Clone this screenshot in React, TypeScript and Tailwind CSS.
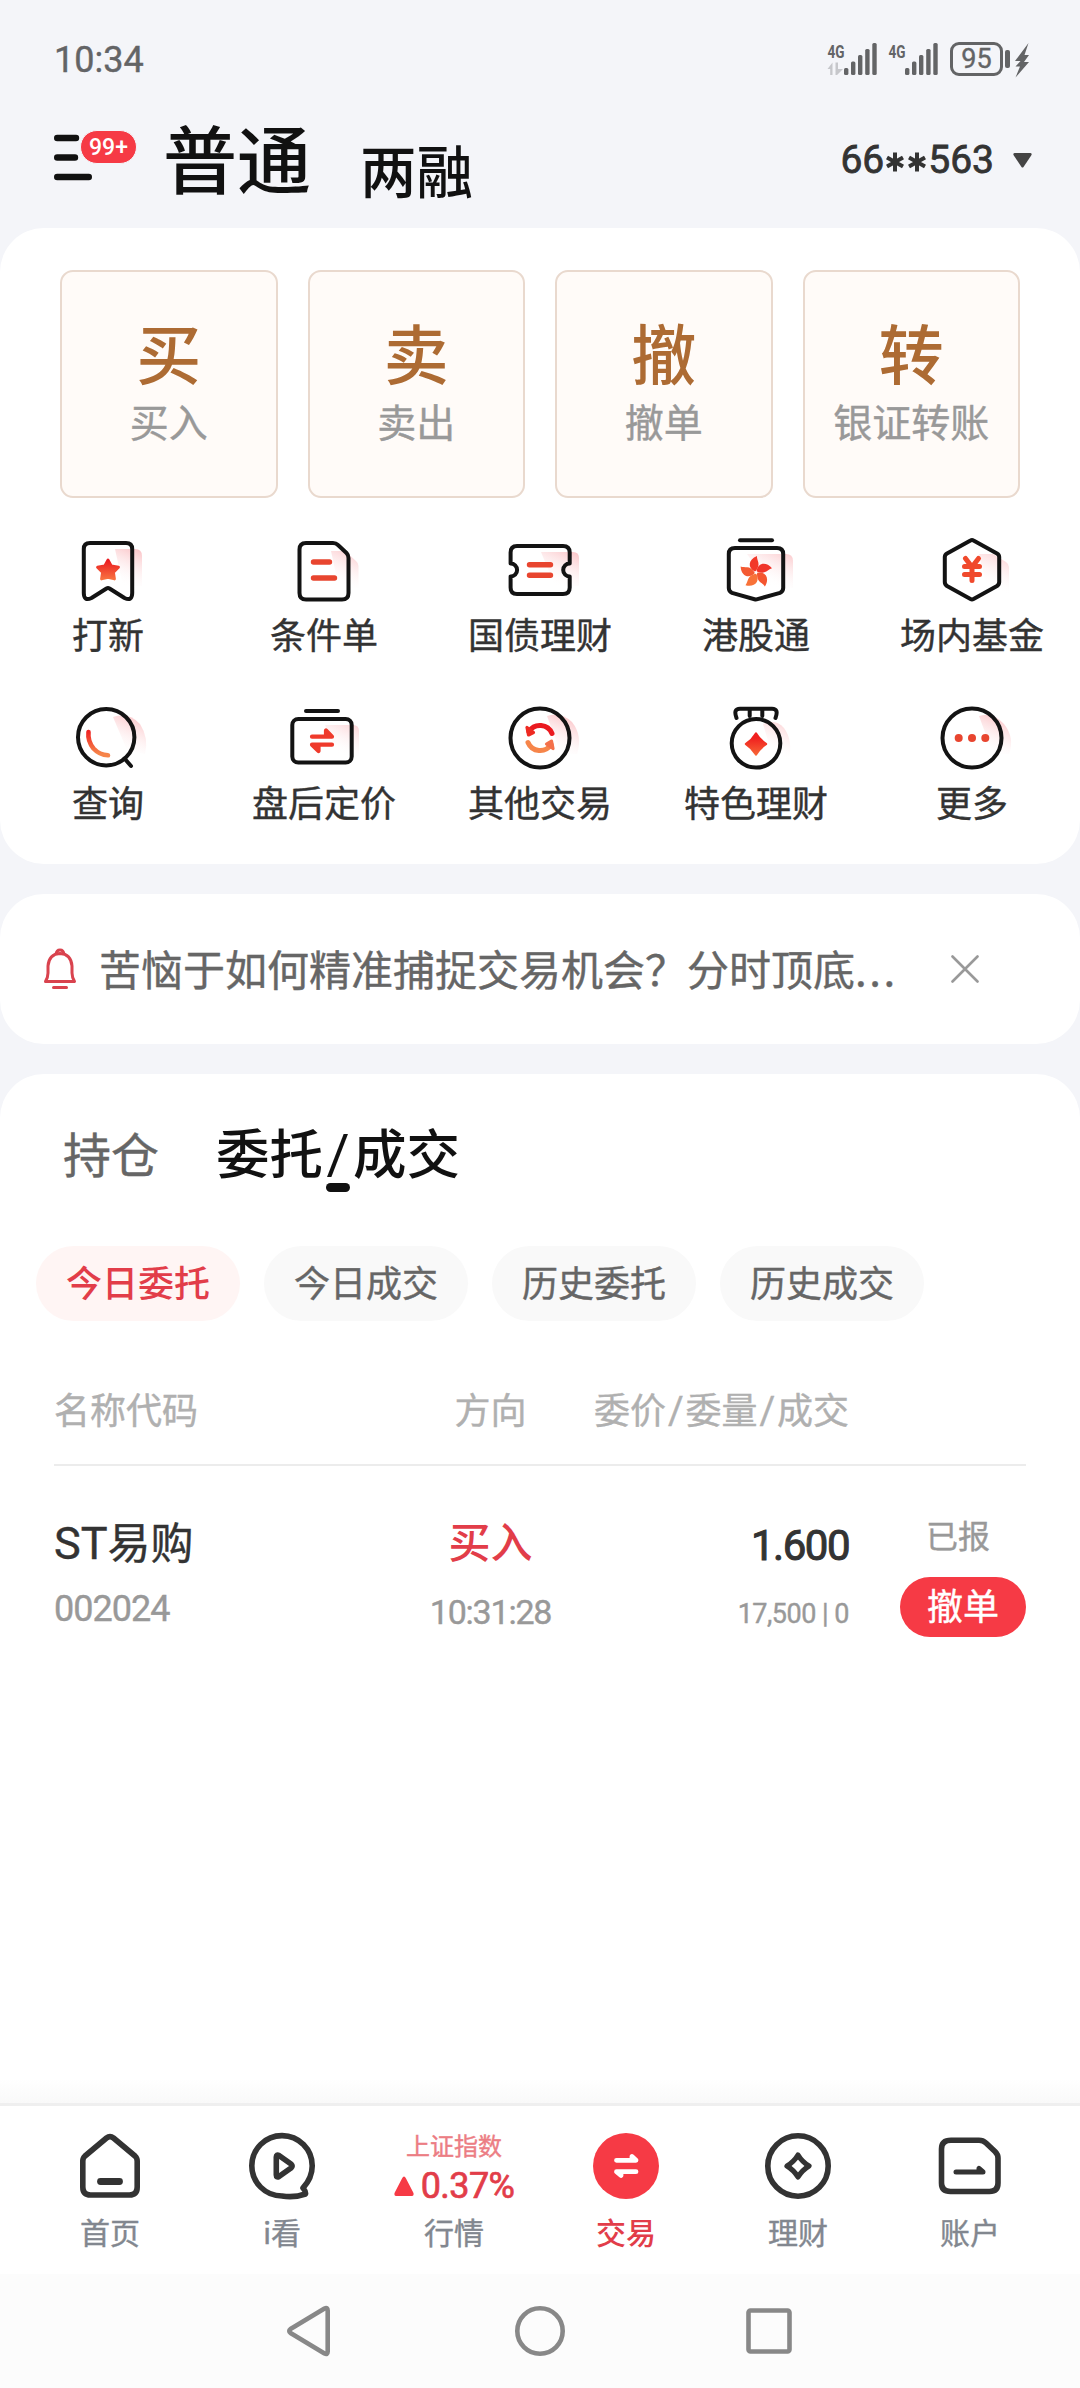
import type { ReactNode } from "react";

const CJK = "font-['Noto_Sans_CJK_SC',sans-serif]";
const NUM = "font-['Roboto','Noto_Sans_CJK_SC',sans-serif]";

function Signal({ activity }: { activity: boolean }) {
  return (
    <svg className="mt-[-10px]" width="51" height="46" viewBox="0 -10 51 46" fill="#636466">
      <text x="0.500" y="15.500" fontSize="19" fontWeight="700" textLength="17" lengthAdjust="spacingAndGlyphs" className={NUM}>4G</text>
      {activity && <path d="M0.500 27 L5.500 20.500 V33 H3.200 V27Z M8.500 20.500 H11 V27 H16 L10 33 H8.500Z" fill="#c6c7cb" />}
      <rect x="17" y="26" width="4.400" height="7" rx="1.500" />
      <rect x="24" y="19.500" width="4.400" height="13.500" rx="1.500" />
      <rect x="31" y="13" width="4.400" height="20" rx="1.500" />
      <rect x="38.200" y="7" width="4.400" height="26" rx="1.500" />
      <rect x="45.300" y="1" width="4.400" height="32" rx="1.500" />
    </svg>
  );
}

function StatusBar() {
  return (
    <div className={`flex h-[112px] items-start justify-between pr-[49px] pl-[54px] text-[#636466] ${NUM}`}>
      <div className="mt-[39px] text-[36px] leading-[42px]">10:34</div>
      <div className="mt-[42px] flex items-start">
        <Signal activity />
        <div className="ml-[10px]"><Signal activity={false} /></div>
        <div className="ml-[11px] flex h-[34px] w-[53px] items-center justify-center rounded-[9px] border-[3.5px] border-[#636466] text-[27px] leading-[30px]">95</div>
        <div className="mt-[8px] ml-[2px] h-[18px] w-[5px] rounded-[2px] bg-[#636466]" />
        <svg className="ml-[4px]" width="17" height="36" viewBox="0 0 17 36" fill="#636466">
          <path d="M14.500 1 L1 19 H6.500 L1.500 24.500 H6 L1.500 35.500 L15 20 H10 L15 13 H10.500Z" />
        </svg>
      </div>
    </div>
  );
}

function Header() {
  return (
    <div className="flex h-[116px] items-start pl-[54px] text-[#111]">
      <div className="relative mt-[22px] w-[109px]">
        <svg width="40" height="48" viewBox="0 0 40 48" fill="none" stroke="#111" strokeWidth="6.400" strokeLinecap="round">
          <path d="M3.200 4 H22 M3.200 23.500 H21 M3.200 43 H34.800" />
        </svg>
        <div className={`absolute top-[-4px] left-[26px] flex h-[34px] w-[57px] items-center justify-center rounded-full border border-[#f4f5f9] bg-[#f63a45] pt-[1px] text-[23px] leading-[33px] font-medium text-white ${NUM}`}>99+</div>
      </div>
      <div className="mt-[-4px] text-[74px] leading-[96px] font-medium">普通</div>
      <div className="mt-[18px] ml-[49px] text-[56.500px] leading-[76px] font-medium">两融</div>
      <div className={`mt-[25px] mr-[48px] ml-auto flex items-center text-[39px] leading-[46px] text-[#333] [-webkit-text-stroke:0.8px] ${NUM}`}>
        66
        <svg className="mt-[4px]" width="44" height="24" viewBox="0 0 44 24" stroke="#333" strokeWidth="4" fill="none">
          <path d="M11 2.500 V21.500 M3 7.500 L19 16.500 M3 16.500 L19 7.500 M33 2.500 V21.500 M25 7.500 L41 16.500 M25 16.500 L41 7.500" />
        </svg>
        563
        <svg className="ml-[19px]" width="19" height="15" viewBox="0 0 19 15" fill="#444"><path d="M1.500 0 H17.500 Q19.500 0.500 18.200 2.500 L10.500 14 Q9.500 15 8.500 14 L0.800 2.500 Q-0.500 0.500 1.500 0Z" /></svg>
      </div>
    </div>
  );
}

const ACTIONS = [
  { glyph: "买", label: "买入" },
  { glyph: "卖", label: "卖出" },
  { glyph: "撤", label: "撤单" },
  { glyph: "转", label: "银证转账" },
];

function Icon({ shade, accent, children }: { shade: ReactNode; accent?: ReactNode; children: ReactNode }) {
  return (
    <svg width="90" height="72" viewBox="0 0 90 72" fill="none" stroke="#131313" strokeWidth="4" strokeLinejoin="round">
      <g fill="url(#shade)" stroke="none">{shade}</g>
      {children}
      <g strokeLinecap="round">{accent}</g>
    </svg>
  );
}

const RED = "url(#flame)";

function Gradients() {
  return (
    <svg width="0" height="0" className="absolute">
      <defs>
        <linearGradient id="shade" gradientUnits="userSpaceOnUse" x1="76" y1="14" x2="60" y2="50">
          <stop offset="0" stopColor="#fbc6c9" />
          <stop offset="1" stopColor="#fff" stopOpacity="0" />
        </linearGradient>
        <linearGradient id="flame" gradientUnits="userSpaceOnUse" x1="0" y1="25" x2="0" y2="50">
          <stop offset="0" stopColor="#ee1a20" />
          <stop offset="1" stopColor="#f6854a" />
        </linearGradient>
        <linearGradient id="gem" gradientUnits="userSpaceOnUse" x1="0" y1="34" x2="0" y2="56">
          <stop offset="0" stopColor="#f0201f" />
          <stop offset="1" stopColor="#fa7a3c" />
        </linearGradient>
        <linearGradient id="star" gradientUnits="userSpaceOnUse" x1="0" y1="24" x2="0" y2="46">
          <stop offset="0" stopColor="#ea1a20" />
          <stop offset="1" stopColor="#fa7f45" />
        </linearGradient>
      </defs>
    </svg>
  );
}

const PETALS = [
  { angle: 0, fill: "#f2382a" },
  { angle: 72, fill: "#f0342a" },
  { angle: 144, fill: "#f4552f" },
  { angle: 216, fill: "#f87238" },
  { angle: 288, fill: "#f45a32" },
];

const SHORTCUTS: { label: string; icon: ReactNode }[] = [
  {
    label: "打新",
    icon: (
      <Icon
        shade={<path d="M52 13 H72 Q79 13 79 20 V50 H60Z" />}
        accent={<path d="M45 24 L48.300 30 L55.500 31.200 L50.500 36.400 L51.500 43 L45 41.500 L38.500 43 L39.500 36.400 L34.500 31.200 L41.700 30Z" fill="url(#star)" stroke="url(#star)" strokeWidth="2.800" />}
      >
        <path d="M27 7 H63 Q69.200 7 69.200 13 V57 Q69.200 65.500 61.500 62 L46.500 52.500 Q45 51.700 43.500 52.500 L28.500 62 Q20.800 65.500 20.800 57 V13 Q20.800 7 27 7Z" />
      </Icon>
    ),
  },
  {
    label: "条件单",
    icon: (
      <Icon
        shade={<path d="M52 15 L66 15 L77 25 Q79.500 27 79.500 30 V52 H60Z" />}
        accent={<path d="M34.500 26 H50.500 M34.500 42 H55.500" stroke="#e8452f" strokeWidth="5.400" />}
      >
        <path d="M27 7 H54 Q57 7 59 9 L67.500 17 Q69.500 19 69.500 22 V57 Q69.500 63.500 63 63.500 H27 Q20.500 63.500 20.500 57 V13.500 Q20.500 7 27 7Z" />
      </Icon>
    ),
  },
  {
    label: "国债理财",
    icon: (
      <Icon
        shade={<path d="M46 16 H78 Q84 16 84 22 V50 H60Z" />}
        accent={<path d="M34.500 28.700 H55.500 M34.500 39.300 H55.500" stroke="#e8452f" strokeWidth="5.400" />}
      >
        <path d="M22 10 H68 Q74.700 10 74.700 16.500 V27.500 A6.500 6.500 0 0 0 74.700 40.500 V51.500 Q74.700 58 68 58 H22 Q15.600 58 15.600 51.500 V40.500 A6.500 6.500 0 0 0 15.600 27.500 V16.500 Q15.600 10 22 10Z" />
      </Icon>
    ),
  },
  {
    label: "港股通",
    icon: (
      <Icon
        shade={<path d="M36 18 H75 Q82 18 82 25 V52 H60Z" />}
        accent={
          <g stroke="none">
            {PETALS.map((p) => (
              <path key={p.angle} d="M43.800 35.500 C36.500 32 37 23.500 46 20 C45.500 24.500 50.500 28 44.800 35Z" fill={p.fill} transform={`rotate(${p.angle} 45 36.500)`} />
            ))}
          </g>
        }
      >
        <path d="M29 4.300 H61" strokeLinecap="round" />
        <path d="M24 12 H66 Q72.200 12 72.200 18 V52 Q72.200 55.500 69 56.800 L46.500 63.200 Q45 63.600 43.500 63.200 L21 56.800 Q17.800 55.500 17.800 52 V18 Q17.800 12 24 12Z" />
      </Icon>
    ),
  },
  {
    label: "场内基金",
    icon: (
      <Icon
        shade={<path d="M52 18 L66 18 L79 26 Q82 28 82 31 V60 H62Z" />}
        accent={<path d="M38.500 22.500 L45 31 L51.500 22.500 M37.500 30.500 H52.500 M37.500 38.500 H52.500 M45 31 V44.500" stroke="#f0492c" strokeWidth="5" />}
      >
        <path d="M43.500 4.500 Q45 3.600 46.500 4.500 L70 17.500 Q72.200 18.800 72.200 21 V46 Q72.200 48.500 70 50 L46.500 63 Q45 63.800 43.500 63 L20 50 Q17.800 48.500 17.800 46 V21 Q17.800 18.800 20 17.500Z" />
      </Icon>
    ),
  },
  {
    label: "查询",
    icon: (
      <Icon
        shade={<path d="M50 13 Q66 8 77 20 Q86 34 82 50 L64 46Z" />}
        accent={<path d="M25.500 28 Q24.500 37 30.500 44.500 Q36.500 51 45 51.300" stroke={RED} strokeWidth="4.600" />}
      >
        <circle cx="43.200" cy="33.200" r="28.200" />
        <path d="M61.500 54.500 L68 62" strokeLinecap="round" />
      </Icon>
    ),
  },
  {
    label: "盘后定价",
    icon: (
      <Icon
        shade={<path d="M46 21 H74 Q80 21 80 27 V52 H60Z" />}
        accent={<path d="M33 32.700 H53 L47 26.500 V31 M53 40.700 H33 L39.500 47 V42" stroke="#ef3a2b" strokeWidth="4.200" fill="#ef3a2b" />}
      >
        <path d="M27 7 H59" strokeLinecap="round" />
        <rect x="13.300" y="15" width="59.400" height="43.500" rx="6" />
      </Icon>
    ),
  },
  {
    label: "其他交易",
    icon: (
      <Icon
        shade={<path d="M52 12 Q66 8 77 18 Q88 32 82 50 L66 50Z" />}
        accent={
          <>
            <path d="M34 27.500 A13 13 0 0 1 57 29.500" stroke="#ea1a20" strokeWidth="5" />
            <path d="M32 23.500 L33.500 31 L38.500 28.500Z" fill="#ee2a22" stroke="#ee2a22" strokeWidth="3.200" />
            <path d="M33 38.500 A13 13 0 0 0 56 40.500" stroke="#f6854a" strokeWidth="5" />
            <path d="M58 44.500 L56.500 37 L51.500 40Z" fill="#f4704a" stroke="#f4704a" strokeWidth="3.200" />
          </>
        }
      >
        <circle cx="45" cy="34" r="29.500" />
      </Icon>
    ),
  },
  {
    label: "特色理财",
    icon: (
      <Icon
        shade={<path d="M52 20 Q64 14 73 24 Q82 36 78 56 L62 54Z" />}
        accent={<path d="M45 29.500 Q48.800 36 55 40 Q48.800 44 45 50.500 Q41.200 44 35 40 Q41.200 36 45 29.500Z" fill="url(#gem)" stroke="url(#gem)" strokeWidth="2.400" />}
      >
        <circle cx="45" cy="39.300" r="24.300" />
        <path d="M25.500 14 Q22 4.700 29 4.700 H61 Q68 4.700 64.500 14 M38.700 5 V12 M51.300 5 V12" strokeLinecap="round" />
      </Icon>
    ),
  },
  {
    label: "更多",
    icon: (
      <Icon
        shade={<path d="M52 12 Q66 8 77 20 Q88 34 82 50 L66 50Z" />}
        accent={
          <g fill="#e8452f" stroke="none">
            <circle cx="31.700" cy="34" r="4" />
            <circle cx="45" cy="34" r="4" />
            <circle cx="58.300" cy="34" r="4" />
          </g>
        }
      >
        <circle cx="45" cy="34" r="29.500" />
      </Icon>
    ),
  },
];

function TradePanel() {
  return (
    <section className="h-[636px] rounded-[44px] bg-white pt-[42px]">
      <div className="grid grid-cols-4 gap-[30px] px-[60px]">
        {ACTIONS.map((a) => (
          <div key={a.glyph} className="flex h-[228px] flex-col items-center rounded-[13px] border-2 border-[#e9d9ce] bg-[#fffbf8] pt-[37px]">
            <div className="text-[65px] leading-[84px] font-medium text-[#ad6b33]">{a.glyph}</div>
            <div className="text-[39px] leading-[54px] text-[#999]">{a.label}</div>
          </div>
        ))}
      </div>
      <div className="mt-[38px] grid grid-cols-5">
        {SHORTCUTS.map((s) => (
          <div key={s.label} className="flex h-[168px] flex-col items-center">
            {s.icon}
            <div className="mt-[-1px] text-[36px] leading-[52px] text-[#333]">{s.label}</div>
          </div>
        ))}
      </div>
    </section>
  );
}

function Notice() {
  return (
    <section className="mt-[30px] flex h-[150px] items-center rounded-[44px] bg-white pl-[42px] text-[#666]">
      <svg width="36" height="44" viewBox="0 0 36 44" fill="none" stroke="#d9434e" strokeWidth="3" strokeLinejoin="round">
        <path d="M14 7.500 Q14.500 3 18 3 Q21.500 3 22 7.500" />
        <path d="M3.500 34.500 Q6 30 6 26 V19 Q7 7 18 6.500 Q29 7 30 19 V26 Q30 30 32.500 34.500Z" />
        <path d="M11.500 40.500 H24.500" strokeLinecap="round" />
      </svg>
      <div className="mt-[-2px] ml-[21px] w-[800px] text-[42px] leading-[60px] whitespace-nowrap">苦恼于如何精准捕捉交易机会？分时顶底<span className="tracking-[2.600px]">...</span></div>
      <svg className="ml-[52px]" width="28" height="28" viewBox="0 0 28 28" fill="none" stroke="#999" strokeWidth="2.600" strokeLinecap="round">
        <path d="M1.500 1.500 L26.500 26.500 M26.500 1.500 L1.500 26.500" />
      </svg>
    </section>
  );
}

const FILTERS = ["今日委托", "今日成交", "历史委托", "历史成交"];

function Slash() {
  return <span className={`w-[19.5px] text-center text-[38px] ${NUM}`}>/</span>;
}

function Orders() {
  return (
    <section className="mt-[30px] h-[1029px] rounded-t-[44px] bg-white pt-[42px]">
      <div className="flex h-[130px] items-start pl-[63px]">
        <div className="mt-[3px] text-[48px] leading-[66px] text-[#666]">持仓</div>
        <div className="relative mt-[-3px] ml-[57px] flex items-baseline text-[53.500px] leading-[76px] font-medium text-[#111]">
          委托<span className={`w-[30px] text-center text-[56px] leading-[60px] font-normal ${NUM}`}>/</span>成交
          <div className="absolute top-[70px] left-[110px] h-[9px] w-[24px] rounded-full bg-[#111]" />
        </div>
      </div>
      <div className="flex gap-[24px] pl-[36px]">
        {FILTERS.map((f, i) => (
          <div
            key={f}
            className={
              i === 0
                ? "flex h-[75px] w-[204px] items-center justify-center rounded-full bg-[#fff5f4] pb-[5px] text-[36px] leading-[52px] font-medium text-[#e23d49]"
                : "flex h-[75px] w-[204px] items-center justify-center rounded-full bg-[#f9f9f9] pb-[5px] text-[36px] leading-[52px] text-[#666]"
            }
          >
            {f}
          </div>
        ))}
      </div>
      <div className="mx-[54px]">
        <div className="grid h-[145px] grid-cols-[346px_181px_268px_1fr] border-b-2 border-[#ececec] pt-[61px] text-[36px] leading-[52px] text-[#b0b0b0]">
          <div>名称代码</div>
          <div className="text-center">方向</div>
          <div className="flex items-baseline justify-end">
            委价<Slash />委量<Slash />成交
          </div>
        </div>
        <div className="grid grid-cols-[346px_181px_268px_1fr] pt-[44px] text-[#999]">
          <div>
            <div className="flex h-[60px] items-baseline text-[43px] leading-[60px] text-[#333]">
              <span className={`text-[45px] leading-[50px] ${NUM}`}>ST</span>易购
            </div>
            <div className={`mt-[18px] text-[36px] leading-[42px] tracking-[-1px] ${NUM}`}>002024</div>
          </div>
          <div className="text-center">
            <div className="text-[42px] leading-[60px] font-medium text-[#e23d49]">买入</div>
            <div className={`mt-[21px] text-[34px] leading-[42px] tracking-[-1.2px] ${NUM}`}>10:31:28</div>
          </div>
          <div className={`text-right ${NUM}`}>
            <div className="mt-[11px] text-[42px] leading-[50px] tracking-[-1.5px] text-[#333] [-webkit-text-stroke:1px]">1.600</div>
            <div className="mt-[25px] text-[27px] leading-[36px] tracking-[-0.5px]">17,500 | 0</div>
          </div>
          <div className="flex flex-col items-end">
            <div className="mr-[36px] text-[32px] leading-[48px]">已报</div>
            <div className="mt-[19px] flex h-[60px] w-[126px] items-center justify-center rounded-full bg-[#f63a45] pb-[6px] text-[36px] leading-[52px] text-white">撤单</div>
          </div>
        </div>
      </div>
    </section>
  );
}

function TabIcon({ children }: { children: ReactNode }) {
  return (
    <svg width="72" height="72" viewBox="0 0 72 72" fill="none" stroke="#333" strokeWidth="5.600" strokeLinejoin="round" strokeLinecap="round">
      {children}
    </svg>
  );
}

const TABS: { label: string; icon: ReactNode; active?: boolean }[] = [
  {
    label: "首页",
    icon: (
      <TabIcon>
        <path d="M32.500 8 Q36 5.200 39.500 8 L61 26 Q63.200 28 63.200 31 V57 Q63.200 65 55.500 65 H16.500 Q8.800 65 8.800 57 V31 Q8.800 28 11 26Z" />
        <path d="M26.500 51.500 H45.500" strokeWidth="6.800" />
      </TabIcon>
    ),
  },
  {
    label: "i看",
    icon: (
      <TabIcon>
        <path d="M57 58 Q66.200 48 66.200 36 A30.200 30.200 0 1 0 36 66 Q48 68 59.500 64 Q60 61.500 57 58Z" />
        <path d="M30.300 27 Q30.300 24 33 25.500 L45 34 Q47 36 45 38 L33 46.500 Q30.300 48 30.300 45Z" />
      </TabIcon>
    ),
  },
  {
    label: "行情",
    icon: (
      <div className="flex h-[72px] flex-col items-center">
        <div className="mt-[-2px] text-[24px] leading-[34px] whitespace-nowrap text-[#ec7d84]">上证指数</div>
        <div className={`mt-[6px] flex items-center text-[36px] leading-[36px] tracking-[-0.6px] text-[#e23d49] [-webkit-text-stroke:0.7px] ${NUM}`}>
          <svg className="mr-[7px]" width="20" height="20" viewBox="0 0 20 20" fill="#f63a45" stroke="none"><path d="M10 0.500 Q11 0.500 12 2.500 L19.500 17 Q20 20 18 20 H2 Q0 20 0.500 17 L8 2.500 Q9 0.500 10 0.500Z" /></svg>
          0.37%
        </div>
      </div>
    ),
  },
  {
    label: "交易",
    active: true,
    icon: (
      <TabIcon>
        <circle cx="36" cy="36" r="33" fill="#f63a45" stroke="none" />
        <path d="M26.500 30.300 H46 L42 26.500 V29 M46 41.700 H26.500 L31 45.500 V43" stroke="#fff" strokeWidth="4.800" fill="#fff" />
      </TabIcon>
    ),
  },
  {
    label: "理财",
    icon: (
      <TabIcon>
        <circle cx="36" cy="36" r="30.200" />
        <path d="M36 25 Q40 31.700 47 36 Q40 40.300 36 47 Q32 40.300 25 36 Q32 31.700 36 25Z" strokeWidth="5.200" />
      </TabIcon>
    ),
  },
  {
    label: "账户",
    icon: (
      <TabIcon>
        <path d="M17 10.300 H45 Q49 10.300 52 13 L61 21.500 Q64 24.500 64 28 V53 Q64 61.500 55.500 61.500 H16.500 Q7.500 61.500 7.500 53 V19 Q7.500 10.300 17 10.300Z" />
        <path d="M22 42 H49 L45 38.500 V41" strokeWidth="5" />
      </TabIcon>
    ),
  },
];

function TabBar() {
  return (
    <div>
      <div className="relative h-[3px] bg-[#efefef]">
        <div className="absolute bottom-[3px] left-0 h-[24px] w-full bg-gradient-to-t from-[#f9f9f9] to-white" />
      </div>
      <div className="flex h-[168px] bg-white px-[24px] pt-[24px]">
        {TABS.map((t) => (
          <div key={t.label} className="flex w-[172px] flex-col items-center">
            {t.icon}
            <div className={t.active ? "mt-[7px] text-[30px] leading-[44px] font-medium text-[#e23d49]" : "mt-[7px] text-[30px] leading-[44px] text-[#82878f]"}>{t.label}</div>
          </div>
        ))}
      </div>
    </div>
  );
}

function SystemNav() {
  return (
    <div className="flex h-[114px] items-start justify-center gap-[177px] bg-[#fcfcfc] pt-[30px] pr-[2px]">
      <svg width="52" height="54" viewBox="0 0 52 54" fill="none" stroke="#888" strokeWidth="4.600" strokeLinejoin="round"><path d="M40.500 4.500 Q43.700 3 43.700 6.500 V47.500 Q43.700 51 40.500 49.500 L6.500 29 Q4 27 6.500 25Z" /></svg>
      <svg width="54" height="54" viewBox="0 0 54 54" fill="none" stroke="#888" strokeWidth="4.600"><circle cx="27" cy="27" r="22.700" /></svg>
      <svg width="50" height="54" viewBox="0 0 50 54" fill="none" stroke="#888" strokeWidth="4.600"><rect x="4.500" y="6.500" width="41" height="41" rx="2" /></svg>
    </div>
  );
}

export default function App() {
  return (
    <div className={`flex h-[2388px] w-[1080px] flex-col overflow-hidden bg-[#f4f5f9] [-webkit-text-stroke:0.4px] [&_.font-medium]:[-webkit-text-stroke:0px] ${CJK}`}>
      <Gradients />
      <StatusBar />
      <Header />
      <TradePanel />
      <Notice />
      <Orders />
      <TabBar />
      <SystemNav />
    </div>
  );
}
